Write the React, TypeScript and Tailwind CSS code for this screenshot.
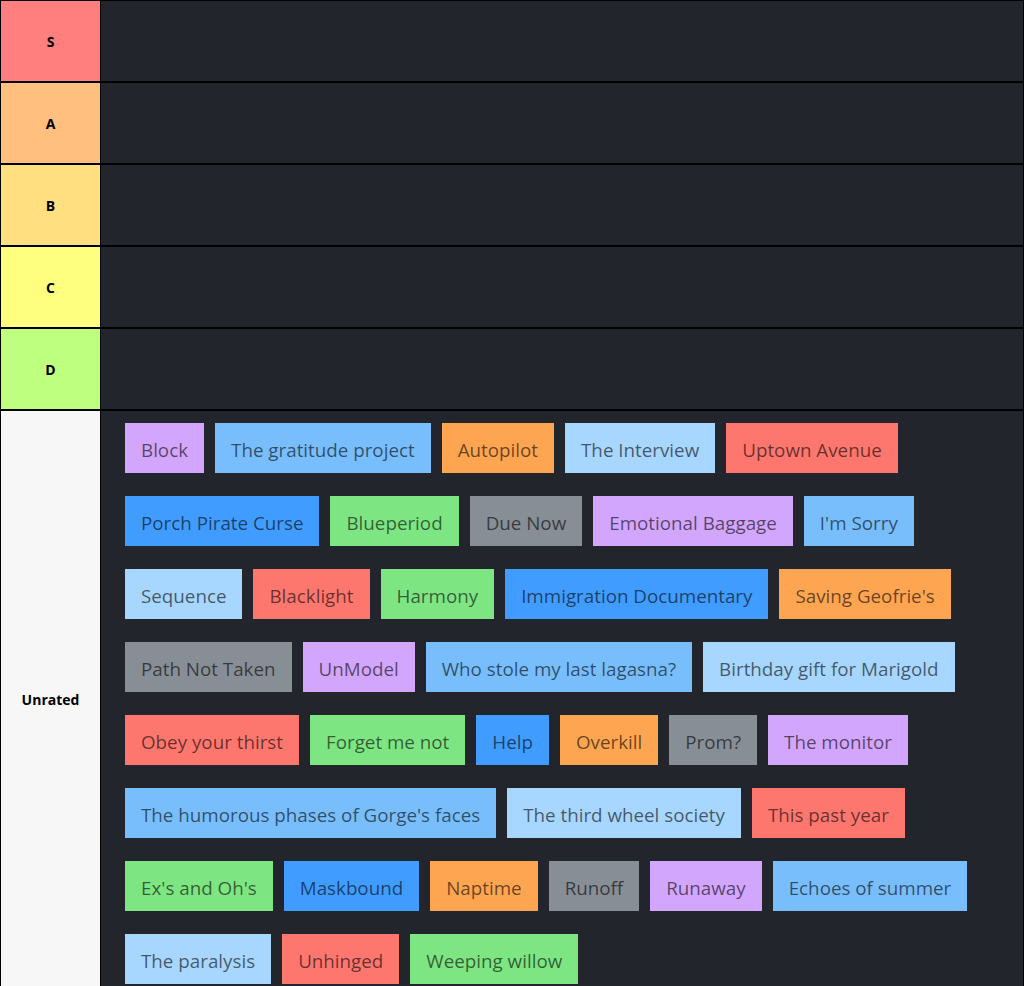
import React from "react";

const tiers = [
  { label: "S", color: "bg-[#ff7f7f]" },
  { label: "A", color: "bg-[#ffbf7f]" },
  { label: "B", color: "bg-[#ffdf7f]" },
  { label: "C", color: "bg-[#ffff7f]" },
  { label: "D", color: "bg-[#bfff7f]" },
];

const colors: Record<string, string> = {
  purple: "bg-[#d3a6fe]",
  sky: "bg-[#78befd]",
  orange: "bg-[#fea552]",
  pale: "bg-[#a7d6fe]",
  red: "bg-[#fe776f]",
  blue: "bg-[#409cfe]",
  green: "bg-[#7ee583]",
  gray: "bg-[#878e95]",
};

const items: [string, string][] = [
  ["Block", "purple"],
  ["The gratitude project", "sky"],
  ["Autopilot", "orange"],
  ["The Interview", "pale"],
  ["Uptown Avenue", "red"],
  ["Porch Pirate Curse", "blue"],
  ["Blueperiod", "green"],
  ["Due Now", "gray"],
  ["Emotional Baggage", "purple"],
  ["I'm Sorry", "sky"],
  ["Sequence", "pale"],
  ["Blacklight", "red"],
  ["Harmony", "green"],
  ["Immigration Documentary", "blue"],
  ["Saving Geofrie's", "orange"],
  ["Path Not Taken", "gray"],
  ["UnModel", "purple"],
  ["Who stole my last lagasna?", "sky"],
  ["Birthday gift for Marigold", "pale"],
  ["Obey your thirst", "red"],
  ["Forget me not", "green"],
  ["Help", "blue"],
  ["Overkill", "orange"],
  ["Prom?", "gray"],
  ["The monitor", "purple"],
  ["The humorous phases of Gorge's faces", "sky"],
  ["The third wheel society", "pale"],
  ["This past year", "red"],
  ["Ex's and Oh's", "green"],
  ["Maskbound", "blue"],
  ["Naptime", "orange"],
  ["Runoff", "gray"],
  ["Runaway", "purple"],
  ["Echoes of summer", "sky"],
  ["The paralysis", "pale"],
  ["Unhinged", "red"],
  ["Weeping willow", "green"],
];

export default function App() {
  return (
    <div className="min-h-screen bg-black p-px font-['Open_Sans',sans-serif]">
      <div className="flex flex-col gap-[2px]">
        {tiers.map((t) => (
          <div key={t.label} className="flex h-[80px] gap-px">
            <div
              className={`w-[99px] shrink-0 flex items-center justify-center text-[14px] font-bold text-black ${t.color}`}
            >
              {t.label}
            </div>
            <div className="flex-1 bg-[#22252c]" />
          </div>
        ))}
        <div className="flex gap-px">
          <div className="w-[99px] shrink-0 flex items-center justify-center text-[14px] font-bold text-black bg-[#f7f7f7]">
            Unrated
          </div>
          <div className="flex-1 bg-[#22252c] pl-[24px] pr-4 pt-3 pb-[3px] flex flex-wrap content-start gap-x-[11px] gap-y-[23px]">
            {items.map(([name, c]) => (
              <div
                key={name}
                className={`h-[50px] px-4 pt-1 flex items-center text-[18.8px] text-black/60 ${colors[c]}`}
              >
                {name}
              </div>
            ))}
          </div>
        </div>
      </div>
    </div>
  );
}
